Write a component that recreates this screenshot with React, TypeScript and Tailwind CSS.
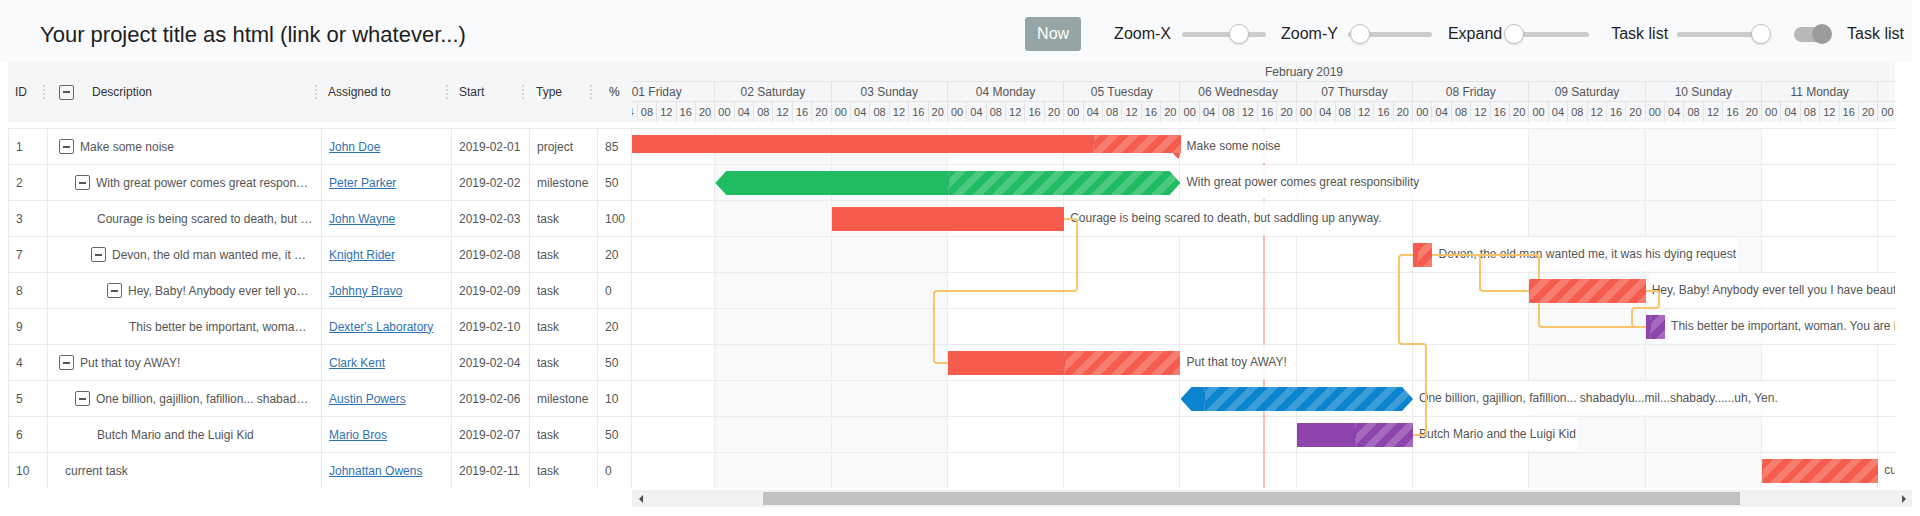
import React from 'react';

const DAY = 116.3;
const HOUR = DAY / 24;
const SCROLL = 33;
const ROW = 36;

const RED = 'bg-[#f65c4d]';
const GREEN = 'bg-[#1fbc62]';
const BLUE = 'bg-[#0b84cf]';
const PURPLE = 'bg-[#8e44ad]';

type Task = {
  id: number;
  label: string;
  user: string;
  date: string;
  type: 'project' | 'milestone' | 'task';
  percent: number;
  level: number;
  parent: boolean;
  start: number;
  dur: number;
  color: string;
};

const tasks: Task[] = [
  { id: 1, label: 'Make some noise', user: 'John Doe', date: '2019-02-01', type: 'project', percent: 85, level: 0, parent: true, start: 0, dur: 120, color: RED },
  { id: 2, label: 'With great power comes great responsibility', user: 'Peter Parker', date: '2019-02-02', type: 'milestone', percent: 50, level: 1, parent: true, start: 24, dur: 96, color: GREEN },
  { id: 3, label: 'Courage is being scared to death, but saddling up anyway.', user: 'John Wayne', date: '2019-02-03', type: 'task', percent: 100, level: 2, parent: false, start: 48, dur: 48, color: RED },
  { id: 7, label: 'Devon, the old man wanted me, it was his dying request', user: 'Knight Rider', date: '2019-02-08', type: 'task', percent: 20, level: 2, parent: true, start: 168, dur: 4, color: RED },
  { id: 8, label: 'Hey, Baby! Anybody ever tell you I have beautiful eyes?', user: 'Johhny Bravo', date: '2019-02-09', type: 'task', percent: 0, level: 3, parent: true, start: 192, dur: 24, color: RED },
  { id: 9, label: 'This better be important, woman. You are interrupting my very delicate calculations.', user: "Dexter's Laboratory", date: '2019-02-10', type: 'task', percent: 20, level: 4, parent: false, start: 216, dur: 4, color: PURPLE },
  { id: 4, label: 'Put that toy AWAY!', user: 'Clark Kent', date: '2019-02-04', type: 'task', percent: 50, level: 0, parent: true, start: 72, dur: 48, color: RED },
  { id: 5, label: 'One billion, gajillion, fafillion... shabadylu...mil...shabady......uh, Yen.', user: 'Austin Powers', date: '2019-02-06', type: 'milestone', percent: 10, level: 1, parent: true, start: 120, dur: 48, color: BLUE },
  { id: 6, label: 'Butch Mario and the Luigi Kid', user: 'Mario Bros', date: '2019-02-07', type: 'task', percent: 50, level: 2, parent: false, start: 144, dur: 24, color: PURPLE },
  { id: 10, label: 'current task', user: 'Johnattan Owens', date: '2019-02-11', type: 'task', percent: 0, level: 0, parent: false, start: 240, dur: 24, color: RED },
];

const days = [
  '01 Friday', '02 Saturday', '03 Sunday', '04 Monday', '05 Tuesday', '06 Wednesday',
  '07 Thursday', '08 Friday', '09 Saturday', '10 Sunday', '11 Monday', '12 Tuesday',
];
const weekend = [1, 2, 8, 9];
const hours = ['00', '04', '08', '12', '16', '20'];

// dependency lines, px relative to the chart body
const links: [number, number][][] = [
  [[432, 91], [445, 91], [445, 163], [302, 163], [302, 235], [316, 235]],
  [[781, 307], [794, 307], [794, 216], [767, 216], [767, 127], [781, 127]],
  [[800, 127], [848, 127], [848, 163], [897, 163]],
  [[800, 127], [907, 127], [907, 199], [1014, 199]],
  [[1014, 163], [1027, 163], [1027, 180], [1000, 180], [1000, 199], [1014, 199]],
];

function roundedPath(pts: [number, number][], r = 3) {
  let d = `M${pts[0][0]},${pts[0][1]}`;
  for (let i = 1; i < pts.length - 1; i++) {
    const [x0, y0] = pts[i - 1];
    const [x1, y1] = pts[i];
    const [x2, y2] = pts[i + 1];
    const d1 = Math.hypot(x1 - x0, y1 - y0);
    const d2 = Math.hypot(x2 - x1, y2 - y1);
    const rr = Math.min(r, d1 / 2, d2 / 2);
    const ax = x1 - ((x1 - x0) / d1) * rr;
    const ay = y1 - ((y1 - y0) / d1) * rr;
    const bx = x1 + ((x2 - x1) / d2) * rr;
    const by = y1 + ((y2 - y1) / d2) * rr;
    d += ` L${ax},${ay} Q${x1},${y1} ${bx},${by}`;
  }
  const last = pts[pts.length - 1];
  return d + ` L${last[0]},${last[1]}`;
}

const Dots = () => (
  <div className="flex flex-col gap-[2px]">
    <span className="w-[2px] h-[2px] bg-[#d4d4d4]" />
    <span className="w-[2px] h-[2px] bg-[#d4d4d4]" />
    <span className="w-[2px] h-[2px] bg-[#d4d4d4]" />
    <span className="w-[2px] h-[2px] bg-[#d4d4d4]" />
  </div>
);

const Collapse = () => (
  <div className="w-[15px] h-[15px] flex-none border border-[#666] rounded-[2px] flex items-center justify-center">
    <span className="w-[7px] h-[2px] bg-[#555]" />
  </div>
);

const Slider = ({ pos, className }: { pos: number; className: string }) => (
  <div className={`relative w-[84px] h-[5px] rounded-full bg-[#cccccc] ${className}`}>
    <div
      className="absolute top-1/2 w-5 h-5 -ml-[10px] -translate-y-1/2 rounded-full bg-white border border-[#c4c4c4] shadow-[0_1px_2px_rgba(0,0,0,0.15)]"
      style={{ left: pos }}
    />
  </div>
);

const Bar = ({ t, i }: { t: Task; i: number }) => {
  const left = t.start * HOUR - SCROLL;
  const width = t.dur * HOUR;
  const done = (width * t.percent) / 100;
  const top = i * ROW + 7;
  const height = t.type === 'project' ? 18 : 24;
  const shape =
    t.type === 'milestone'
      ? '[clip-path:polygon(0_50%,11px_0,calc(100%_-_11px)_0,100%_50%,calc(100%_-_11px)_100%,11px_100%)]'
      : '';
  return (
    <>
      <div className={`absolute ${t.color} ${shape} overflow-hidden`} style={{ left, width, top, height }}>
        {t.percent < 100 && (
          <div
            className="absolute inset-y-0 right-0 border-l border-black/5 bg-[repeating-linear-gradient(-45deg,rgba(255,255,255,0.2)_0px,rgba(255,255,255,0.2)_7px,transparent_7px,transparent_14px)]"
            style={{ left: done }}
          />
        )}
      </div>
      {t.type === 'project' && (
        <div
          className={`absolute w-[8px] h-[6px] ${t.color} [clip-path:polygon(0_0,100%_0,75%_100%)]`}
          style={{ left: left + width - 8, top: top + height }}
        />
      )}
    </>
  );
};

export default function App() {
  return (
    <div className="w-[1920px] h-[516px] overflow-hidden bg-white font-['Liberation_Sans',Arial,sans-serif]">
      {/* Title bar */}
      <div className="h-[62px] w-[1912px] bg-[#f9fafb] flex items-center pt-[6px] pl-10 pr-[8px]">
        <div className="text-[22px] text-[#1f1f1f]">Your project title as html (link or whatever...)</div>
        <div className="ml-auto flex items-center text-[16px] text-[#1f1f1f]">
          <button className="w-[56px] h-[34px] rounded-[3px] bg-[#95a5a6] text-white text-[16px]">Now</button>
          <span className="ml-[33px]">Zoom-X</span>
          <Slider pos={57} className="ml-[11px]" />
          <span className="ml-[15px]">Zoom-Y</span>
          <Slider pos={12} className="ml-[10px]" />
          <span className="ml-[16px]">Expand</span>
          <Slider pos={9} className="ml-[3px]" />
          <span className="ml-[22px]">Task list</span>
          <Slider pos={84} className="ml-[9px]" />
          <div className="relative ml-[33px] w-[36px] h-[15px] rounded-full bg-[#b8b8b8]">
            <div className="absolute right-[-2px] top-1/2 -translate-y-1/2 w-5 h-5 rounded-full bg-[#9b9b9b]" />
          </div>
          <span className="ml-[17px]">Task list</span>
        </div>
      </div>

      <div className="flex pl-2 text-[12px]">
        {/* Task list */}
        <div className="w-[624px] flex-none">
          <div className="h-[60px] bg-[#f5f6f8] flex items-center text-[#333]">
            <div className="w-[40px] pl-[7px] pr-[3px] flex items-center justify-between">
              <span>ID</span>
              <Dots />
            </div>
            <div className="w-[274px] pl-[11px] pr-[5px] flex items-center">
              <Collapse />
              <span className="ml-[18px]">Description</span>
              <span className="ml-auto"><Dots /></span>
            </div>
            <div className="w-[130px] pl-[6px] pr-[4px] flex items-center justify-between">
              <span>Assigned to</span>
              <Dots />
            </div>
            <div className="w-[78px] pl-[7px] pr-[6px] flex items-center justify-between">
              <span>Start</span>
              <Dots />
            </div>
            <div className="w-[68px] pl-[6px] pr-[6px] flex items-center justify-between">
              <span>Type</span>
              <Dots />
            </div>
            <div className="w-[34px] pl-[11px]">%</div>
          </div>
          <div className="mt-[6px] text-[#555]">
            {tasks.map((t) => (
              <div key={t.id} className="h-[36px] flex border-t border-[#ebebeb]">
                <div className="w-[40px] flex-none pl-[7px] flex items-center border-x border-[#ebebeb]">{t.id}</div>
                <div
                  className="w-[274px] flex-none pr-[8px] flex items-center border-r border-[#ebebeb] min-w-0"
                  style={{ paddingLeft: 11 + 16 * t.level + (t.parent ? 0 : 6) }}
                >
                  {t.parent && <Collapse />}
                  <span className={`truncate ${t.parent ? 'ml-[6px]' : ''}`}>{t.label}</span>
                </div>
                <div className="w-[130px] flex-none pl-[7px] flex items-center border-r border-[#ebebeb]">
                  <a className="text-[#2f72b3] underline">{t.user}</a>
                </div>
                <div className="w-[78px] flex-none pl-[7px] flex items-center border-r border-[#ebebeb]">{t.date}</div>
                <div className="w-[68px] flex-none pl-[7px] flex items-center border-r border-[#ebebeb]">{t.type}</div>
                <div className="w-[34px] flex-none pl-[7px] flex items-center border-r border-[#ebebeb]">{t.percent}</div>
              </div>
            ))}
          </div>
        </div>

        {/* Chart */}
        <div className="w-[1280px] flex-none">
          <div className="h-[60px] w-[1263px] overflow-hidden bg-[#f5f6f8] text-[#555]">
            <div className="h-[20px] flex items-center pl-[633px] border-b border-[#e3e4e6]">February 2019</div>
            <div className="h-[20px] flex ml-[-33px] border-b border-[#e3e4e6]">
              {days.map((d) => (
                <div key={d} className="w-[116.3px] flex-none flex items-center justify-center border-r border-[#e3e4e6]">
                  {d}
                </div>
              ))}
            </div>
            <div className="h-[20px] flex ml-[-33px] text-[11px]">
              {days.map((d) => (
                <div key={d} className="w-[116.3px] flex-none grid grid-cols-6">
                  {hours.map((h) => (
                    <div key={h} className="flex items-center justify-center border-r border-[#e3e4e6]">{h}</div>
                  ))}
                </div>
              ))}
            </div>
          </div>

          <div className="relative mt-[6px] w-[1263px] h-[360px] overflow-hidden">
            <div className="absolute inset-y-0 left-[-33px] flex">
              {days.map((d, i) => (
                <div
                  key={d}
                  className={`w-[116.3px] h-full flex-none border-r border-[#ececec] ${weekend.includes(i) ? 'bg-[#f8f9fb]' : ''}`}
                />
              ))}
            </div>
            <div className="relative">
              {tasks.map((t) => (
                <div key={t.id} className="h-[36px] border-t border-[#ebebeb]" />
              ))}
            </div>
            <div className="absolute top-0 bottom-0 left-[631px] w-[2px] bg-[#f8a5a5]/70" />
            {tasks.map((t, i) => (
              <div
                key={t.id}
                className="absolute h-[34px] flex items-center px-[2px] bg-white/90 text-[#555] whitespace-nowrap"
                style={{ left: (t.start + t.dur) * HOUR - SCROLL + 4, top: i * ROW + 1 }}
              >
                {t.label}
              </div>
            ))}
            <svg className="absolute inset-0 w-full h-full pointer-events-none" width="1263" height="360">
              {links.map((p, i) => (
                <path key={i} d={roundedPath(p)} fill="none" stroke="#f9c46b" strokeWidth="2" />
              ))}
            </svg>
            {tasks.map((t, i) => (
              <Bar key={t.id} t={t} i={i} />
            ))}
          </div>

          {/* scrollbar */}
          <div className="mt-[2px] h-[17px] w-[1280px] bg-[#f1f1f1] flex items-center">
            <div className="w-[17px] h-full flex items-center justify-center">
              <span className="w-0 h-0 border-y-[4px] border-y-transparent border-r-[4px] border-r-[#505050]" />
            </div>
            <div className="ml-[114px] w-[977px] h-[13px] bg-[#c1c1c1]" />
            <div className="ml-auto w-[17px] h-full flex items-center justify-center">
              <span className="w-0 h-0 border-y-[4px] border-y-transparent border-l-[4px] border-l-[#505050]" />
            </div>
          </div>
        </div>
      </div>
    </div>
  );
}
